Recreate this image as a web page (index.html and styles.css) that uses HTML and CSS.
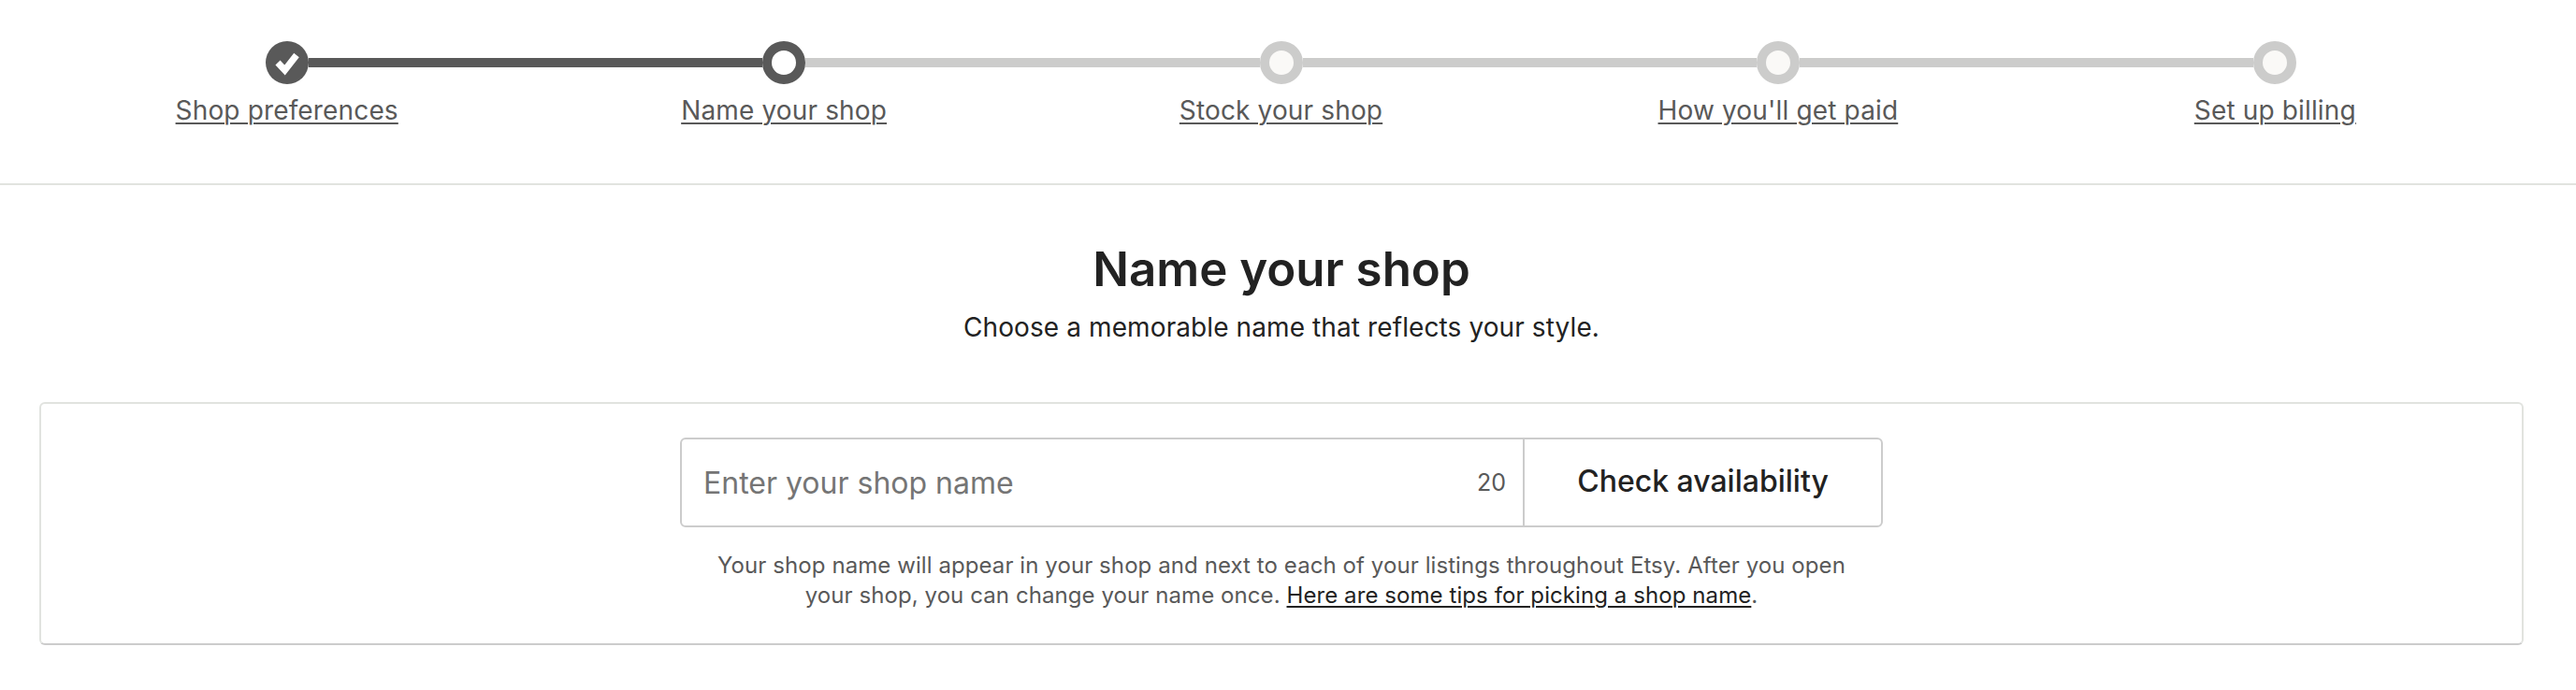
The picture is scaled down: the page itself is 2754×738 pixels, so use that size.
FILE: index.html
```html
<!DOCTYPE html>
<html lang="en">
<head>
<meta charset="utf-8">
<title>Name your shop</title>
<link rel="stylesheet" href="styles.css">
</head>
<body>
<header class="steps-bar">
  <ol class="steps">
    <li class="step step-first step-done">
      <div class="track">
        <span class="seg seg-none"></span>
        <span class="dot dot-done">
          <svg class="check" viewBox="0 0 46 46" width="46" height="46"><polyline points="13 23 20.5 31 33 15" fill="none" stroke="#fff" stroke-width="7"/></svg>
        </span>
        <span class="seg seg-dark"></span>
      </div>
      <a class="step-label" href="#">Shop preferences</a>
    </li>
    <li class="step">
      <div class="track">
        <span class="seg seg-dark"></span>
        <span class="dot dot-active"></span>
        <span class="seg"></span>
      </div>
      <a class="step-label" href="#">Name your shop</a>
    </li>
    <li class="step">
      <div class="track">
        <span class="seg"></span>
        <span class="dot"></span>
        <span class="seg"></span>
      </div>
      <a class="step-label" href="#">Stock your shop</a>
    </li>
    <li class="step">
      <div class="track">
        <span class="seg"></span>
        <span class="dot"></span>
        <span class="seg"></span>
      </div>
      <a class="step-label" href="#">How you'll get paid</a>
    </li>
    <li class="step">
      <div class="track">
        <span class="seg"></span>
        <span class="dot"></span>
        <span class="seg seg-none"></span>
      </div>
      <a class="step-label" href="#">Set up billing</a>
    </li>
  </ol>
</header>
<main class="content">
  <h1 class="title">Name your shop</h1>
  <p class="subtitle">Choose a memorable name that reflects your style.</p>
  <section class="card">
    <form class="name-form">
      <div class="field">
        <input class="name-input" type="text" placeholder="Enter your shop name">
        <span class="counter">20</span>
      </div>
      <button class="check-btn" type="button">Check availability</button>
    </form>
    <p class="help">Your shop name will appear in your shop and next to each of your listings throughout Etsy. After you open your shop, you can change your name once. <a class="help-link" href="#">Here are some tips for picking a shop name</a>.</p>
  </section>
</main>
</body>
</html>
```
FILE: styles.css
```css
* { box-sizing: border-box; }
html, body { margin: 0; padding: 0; }
body {
  background: #fff;
  color: #222;
  font-family: Inter, "Liberation Sans", sans-serif;
  height: 738px;
  overflow: hidden;
}
.steps-bar {
  height: 198px;
  padding: 44px 15px 0 0;
  border-bottom: 2px solid #e1e3df;
}
.steps {
  list-style: none;
  margin: 0 auto;
  padding: 0;
  width: 2657px;
  display: grid;
  grid-template-columns: repeat(5, 1fr);
}
.step { display: flex; flex-direction: column; align-items: center; }
.track { display: flex; align-items: center; width: 100%; height: 46px; }
.seg { flex: 1; height: 10px; background: #cccccb; }
.seg-dark { background: #595959; }
.seg-none { background: transparent; }
.dot {
  flex: none;
  width: 46px;
  height: 46px;
  border: 10px solid #cccccb;
  border-radius: 50%;
  background: #faf9f7;
}
.dot-active { border-color: #595959; background: #fff; }
.dot-done { border: 0; background: #595959; }
.check { display: block; }
.step-label {
  margin-top: 10px;
  color: #595959;
  font-size: 28px;
  line-height: 36px;
  letter-spacing: 0.15px;
  text-decoration: underline;
  text-underline-offset: 3px;
  text-decoration-thickness: 2px;
}
.content { padding: 0 56px 0 42px; }
.title {
  margin: 56px 0 0;
  font-size: 51px;
  line-height: 68px;
  font-weight: 600;
  text-align: center;
}
.subtitle {
  margin: 8px 0 0;
  font-size: 28px;
  line-height: 40px;
  letter-spacing: 0.1px;
  text-align: center;
}
.card {
  margin-top: 60px;
  height: 260px;
  padding: 36px 0 0;
  border: 2px solid #e1e3df;
  border-bottom-color: #ccc;
  border-radius: 6px;
}
.name-form {
  display: flex;
  width: 1286px;
  height: 96px;
  margin: 0 auto;
  border: 2px solid #ccc;
  border-radius: 6px;
}
.field { flex: 1; display: flex; align-items: center; padding: 0 18px 0 23px; border-right: 2px solid #ccc; }
.name-input {
  flex: 1;
  min-width: 0;
  border: 0;
  outline: 0;
  padding: 0;
  background: transparent;
  font: 400 32px Inter, "Liberation Sans", sans-serif;
  color: #222;
}
.name-input::placeholder { color: #757575; opacity: 1; }
.counter { font-size: 25px; color: #595959; }
.check-btn {
  flex: none;
  width: 381px;
  border: 0;
  padding: 0 0 3px;
  background: transparent;
  color: #222;
  font: 500 32px Inter, "Liberation Sans", sans-serif;
}
.help {
  width: 1240px;
  margin: 25px auto 0;
  color: #595959;
  font-size: 24px;
  line-height: 32px;
  letter-spacing: 0.08px;
  text-align: center;
}
.help-link { color: #222; text-decoration: underline; text-underline-offset: 3px; text-decoration-thickness: 2px; }
```
